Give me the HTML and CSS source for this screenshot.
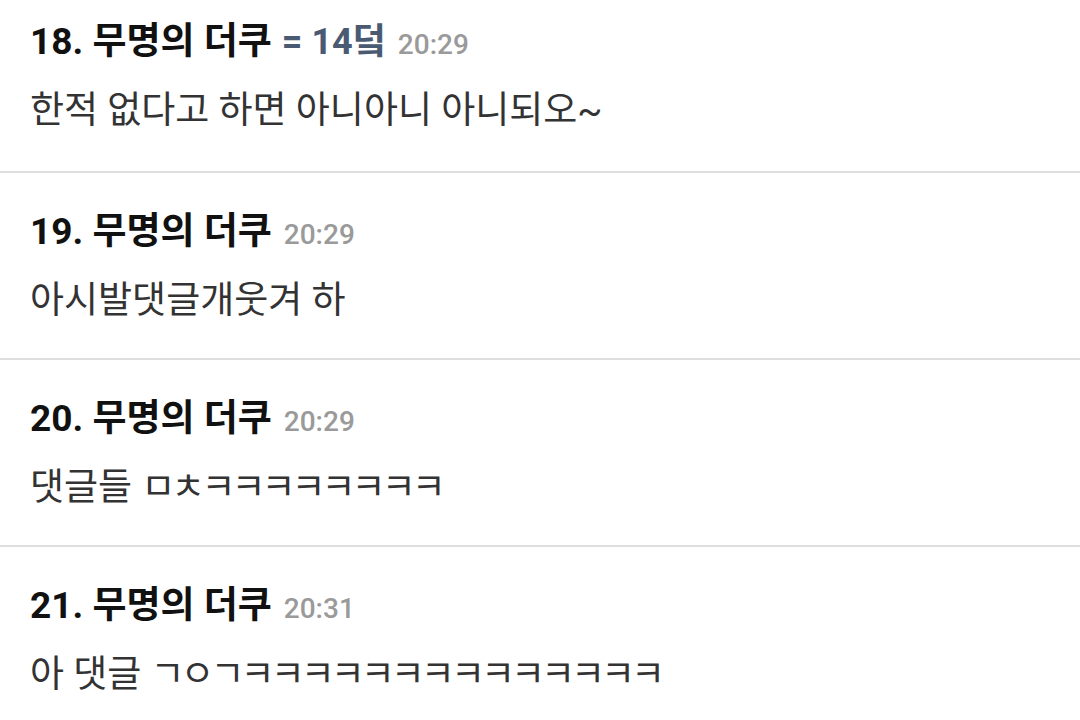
FILE: index.html
```html
<!DOCTYPE html>
<html>
<head>
  <title>댓글</title>
  <link rel="stylesheet" href="styles.css">
</head>
<body>
  <ul class="comments">
    <li class="comment">
      <div class="comment-head">
        <span class="author">18. 무명의 더쿠</span>
        <span class="reply-to">= 14덬</span>
        <span class="time">20:29</span>
      </div>
      <div class="comment-body">한적 없다고 하면 아니아니 아니되오~</div>
    </li>
    <li class="comment">
      <div class="comment-head">
        <span class="author">19. 무명의 더쿠</span>
        <span class="time">20:29</span>
      </div>
      <div class="comment-body">아시발댓글개웃겨 하</div>
    </li>
    <li class="comment">
      <div class="comment-head">
        <span class="author">20. 무명의 더쿠</span>
        <span class="time">20:29</span>
      </div>
      <div class="comment-body">댓글들 <span class="jamo">ㅁㅊㅋㅋㅋㅋㅋㅋㅋㅋ</span></div>
    </li>
    <li class="comment">
      <div class="comment-head">
        <span class="author">21. 무명의 더쿠</span>
        <span class="time">20:31</span>
      </div>
      <div class="comment-body">아 댓글 <span class="jamo">ㄱㅇㄱㅋㅋㅋㅋㅋㅋㅋㅋㅋㅋㅋㅋㅋㅋ</span></div>
    </li>
  </ul>
</body>
</html>
```

FILE: styles.css
```css
body {
  margin: 0;
  background-color: #ffffff;
  font-family: Roboto, "Noto Sans CJK KR", sans-serif;
}

.comments {
  list-style: none;
  margin: 0;
  padding: 0;
}

.comment {
  padding: 34px 30px 32px;
  border-bottom: 2px solid #dedede;
}

.comment:first-child {
  padding-top: 17px;
  padding-bottom: 35px;
}

.comment-head {
  display: flex;
  align-items: baseline;
  gap: 10px;
  height: 50px;
  line-height: 50px;
}

.author {
  font-size: 37px;
  font-weight: bold;
  color: #111111;
}

.reply-to {
  font-size: 36px;
  font-weight: bold;
  color: #4a5a72;
}

.time {
  margin-left: 2px;
  font-size: 28px;
  font-weight: 500;
  color: #9a9a9a;
}

.comment-body {
  margin-top: 19px;
  font-size: 37px;
  line-height: 50px;
  color: #333333;
}

.jamo {
  letter-spacing: -4px;
}
```
